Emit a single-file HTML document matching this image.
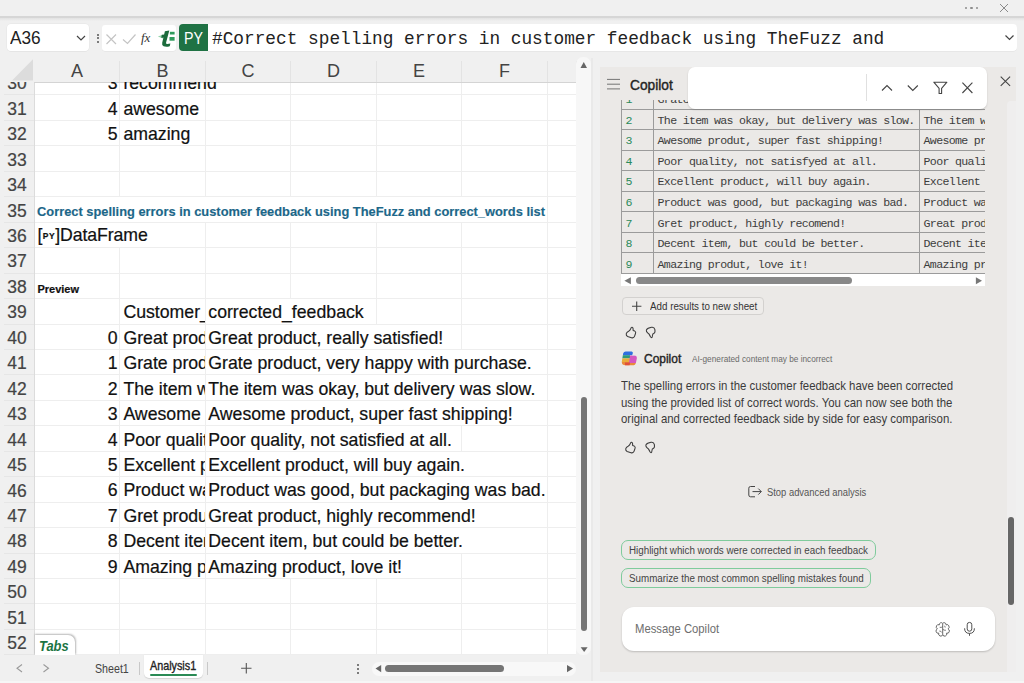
<!DOCTYPE html><html><head><meta charset="utf-8"><style>
html,body{margin:0;padding:0;}
body{width:1024px;height:683px;overflow:hidden;position:relative;background:#f0f0f0;font-family:"Liberation Sans",sans-serif;}
.t{position:absolute;white-space:nowrap;}
.cl{-webkit-text-stroke:0.2px currentColor;}
.r{position:absolute;box-sizing:border-box;}
svg{position:absolute;overflow:visible;}
</style></head><body>
<div class="r" style="left:0.00px;top:16.00px;width:1024.00px;height:2.00px;background:#d6d6d6;"></div>
<div class="r" style="left:0.00px;top:18.00px;width:1024.00px;height:3.00px;background:linear-gradient(#e2e2e2,#f0f0f0);"></div>
<div class="r" style="left:964.80px;top:6.60px;width:2.40px;height:2.40px;background:#8c8c8c;border-radius:1.2px;"></div>
<div class="r" style="left:970.30px;top:6.60px;width:2.40px;height:2.40px;background:#8c8c8c;border-radius:1.2px;"></div>
<div class="r" style="left:975.80px;top:6.60px;width:2.40px;height:2.40px;background:#8c8c8c;border-radius:1.2px;"></div>
<svg style="left:0;top:0" width="1024" height="20"><path d="M1000 4 L1008 12 M1008 4 L1000 12" stroke="#8a8a8a" stroke-width="1"/></svg>
<div class="r" style="left:7.00px;top:24.00px;width:82.00px;height:27.00px;background:#fff;border-radius:4px;box-shadow:0 0 0 0.5px #e4e4e4, 0 0.6px 0.4px #dedede;"></div>
<div class="t " style="top:29.19px;font-size:17.8px;line-height:1.1172em;font-family:'Liberation Sans', sans-serif;color:#222;left:9.60px;transform:scaleX(0.97);transform-origin:0 0;">A36</div>
<svg style="left:0;top:0" width="100" height="60"><path d="M77 36 L81 40 L85 36" fill="none" stroke="#444" stroke-width="1.2"/></svg>
<div class="r" style="left:96.50px;top:33.60px;width:2.00px;height:2.00px;background:#555;border-radius:1px;"></div>
<div class="r" style="left:96.50px;top:37.10px;width:2.00px;height:2.00px;background:#555;border-radius:1px;"></div>
<div class="r" style="left:96.50px;top:40.60px;width:2.00px;height:2.00px;background:#555;border-radius:1px;"></div>
<div class="r" style="left:102.00px;top:24.80px;width:74.00px;height:26.40px;background:#fff;border-radius:3px;box-shadow:0 0.6px 0.4px #dedede;"></div>
<svg style="left:0;top:0" width="260" height="60">
<path d="M106.5 34.5 L116 44 M116 34.5 L106.5 44" stroke="#c4c4c4" stroke-width="1.2" fill="none"/>
<path d="M123 39.5 L127.5 43.5 L135.5 34.5" stroke="#c4c4c4" stroke-width="1.2" fill="none"/>
</svg>
<div class="t" style="left:141px;top:29px;font-family:'Liberation Serif',serif;font-style:italic;font-size:13px;line-height:18px;color:#333;">fx</div>
<svg style="left:0;top:0" width="260" height="60">
<path d="M157.8 36.6 L163.6 34.4 L163 38.6 Z" fill="#93d3ab"/>
<path d="M161.8 34.8 L166.8 34.5 L166.2 37.6 L161.3 37.8 Z" fill="#1b6b3c"/>
<path d="M164.9 31.3 L169.3 30.6 L166.1 42.6 Q165.7 44.2 167.4 44.1 L170.4 43.5 L169.7 46.2 Q166.4 47.3 163.6 46.3 Q161.6 45.4 162.2 42.8 Z" fill="#1b6b3c"/>
<rect x="169.9" y="31.8" width="4.7" height="2.7" fill="#2f9a5c"/>
<rect x="169.5" y="37" width="5.1" height="3.7" fill="#2f9a5c"/>
</svg>
<div class="r" style="left:179.00px;top:24.00px;width:29.00px;height:27.20px;background:#1f7244;border-radius:4px 0 0 4px;"></div>
<div class="t " style="top:29.26px;font-size:16.5px;line-height:1.1172em;font-family:'Liberation Sans', sans-serif;color:#fff;left:184.40px;transform:scaleX(0.86);transform-origin:0 0;">PY</div>
<div class="r" style="left:208.00px;top:24.00px;width:809.00px;height:27.00px;background:#fff;border-radius:0 4px 4px 0;box-shadow:0 0.6px 0.4px #dedede;"></div>
<div class="t " style="top:29.38px;font-size:17.8px;line-height:1.1328em;font-family:'Liberation Mono', monospace;color:#222;left:212.00px;">#Correct spelling errors in customer feedback using TheFuzz and</div>
<svg style="left:0;top:0" width="1024" height="60"><path d="M1005.5 35.5 L1009.5 39.5 L1013.5 35.5" fill="none" stroke="#444" stroke-width="1.2"/></svg>
<div class="r" style="left:34.30px;top:82.30px;width:542.10px;height:572.90px;background:#fff;"></div>
<div class="r" style="left:34.30px;top:94.45px;width:542.10px;height:1.00px;background:#eeeeee;"></div>
<div class="r" style="left:34.30px;top:119.90px;width:542.10px;height:1.00px;background:#eeeeee;"></div>
<div class="r" style="left:34.30px;top:145.35px;width:542.10px;height:1.00px;background:#eeeeee;"></div>
<div class="r" style="left:34.30px;top:170.80px;width:542.10px;height:1.00px;background:#eeeeee;"></div>
<div class="r" style="left:34.30px;top:196.25px;width:542.10px;height:1.00px;background:#eeeeee;"></div>
<div class="r" style="left:34.30px;top:221.70px;width:542.10px;height:1.00px;background:#eeeeee;"></div>
<div class="r" style="left:34.30px;top:247.15px;width:542.10px;height:1.00px;background:#eeeeee;"></div>
<div class="r" style="left:34.30px;top:272.60px;width:542.10px;height:1.00px;background:#eeeeee;"></div>
<div class="r" style="left:34.30px;top:298.05px;width:542.10px;height:1.00px;background:#eeeeee;"></div>
<div class="r" style="left:34.30px;top:323.50px;width:542.10px;height:1.00px;background:#eeeeee;"></div>
<div class="r" style="left:34.30px;top:348.95px;width:542.10px;height:1.00px;background:#eeeeee;"></div>
<div class="r" style="left:34.30px;top:374.40px;width:542.10px;height:1.00px;background:#eeeeee;"></div>
<div class="r" style="left:34.30px;top:399.85px;width:542.10px;height:1.00px;background:#eeeeee;"></div>
<div class="r" style="left:34.30px;top:425.30px;width:542.10px;height:1.00px;background:#eeeeee;"></div>
<div class="r" style="left:34.30px;top:450.75px;width:542.10px;height:1.00px;background:#eeeeee;"></div>
<div class="r" style="left:34.30px;top:476.20px;width:542.10px;height:1.00px;background:#eeeeee;"></div>
<div class="r" style="left:34.30px;top:501.65px;width:542.10px;height:1.00px;background:#eeeeee;"></div>
<div class="r" style="left:34.30px;top:527.10px;width:542.10px;height:1.00px;background:#eeeeee;"></div>
<div class="r" style="left:34.30px;top:552.55px;width:542.10px;height:1.00px;background:#eeeeee;"></div>
<div class="r" style="left:34.30px;top:578.00px;width:542.10px;height:1.00px;background:#eeeeee;"></div>
<div class="r" style="left:34.30px;top:603.45px;width:542.10px;height:1.00px;background:#eeeeee;"></div>
<div class="r" style="left:34.30px;top:628.90px;width:542.10px;height:1.00px;background:#eeeeee;"></div>
<div class="r" style="left:34.30px;top:654.35px;width:542.10px;height:1.00px;background:#eeeeee;"></div>
<div class="r" style="left:119.30px;top:82.30px;width:1.00px;height:12.65px;background:#eeeeee;"></div>
<div class="r" style="left:204.80px;top:82.30px;width:1.00px;height:12.65px;background:#eeeeee;"></div>
<div class="r" style="left:290.30px;top:82.30px;width:1.00px;height:12.65px;background:#eeeeee;"></div>
<div class="r" style="left:375.80px;top:82.30px;width:1.00px;height:12.65px;background:#eeeeee;"></div>
<div class="r" style="left:461.30px;top:82.30px;width:1.00px;height:12.65px;background:#eeeeee;"></div>
<div class="r" style="left:546.80px;top:82.30px;width:1.00px;height:12.65px;background:#eeeeee;"></div>
<div class="r" style="left:119.30px;top:94.95px;width:1.00px;height:25.45px;background:#eeeeee;"></div>
<div class="r" style="left:204.80px;top:94.95px;width:1.00px;height:25.45px;background:#eeeeee;"></div>
<div class="r" style="left:290.30px;top:94.95px;width:1.00px;height:25.45px;background:#eeeeee;"></div>
<div class="r" style="left:375.80px;top:94.95px;width:1.00px;height:25.45px;background:#eeeeee;"></div>
<div class="r" style="left:461.30px;top:94.95px;width:1.00px;height:25.45px;background:#eeeeee;"></div>
<div class="r" style="left:546.80px;top:94.95px;width:1.00px;height:25.45px;background:#eeeeee;"></div>
<div class="r" style="left:119.30px;top:120.40px;width:1.00px;height:25.45px;background:#eeeeee;"></div>
<div class="r" style="left:204.80px;top:120.40px;width:1.00px;height:25.45px;background:#eeeeee;"></div>
<div class="r" style="left:290.30px;top:120.40px;width:1.00px;height:25.45px;background:#eeeeee;"></div>
<div class="r" style="left:375.80px;top:120.40px;width:1.00px;height:25.45px;background:#eeeeee;"></div>
<div class="r" style="left:461.30px;top:120.40px;width:1.00px;height:25.45px;background:#eeeeee;"></div>
<div class="r" style="left:546.80px;top:120.40px;width:1.00px;height:25.45px;background:#eeeeee;"></div>
<div class="r" style="left:119.30px;top:145.85px;width:1.00px;height:25.45px;background:#eeeeee;"></div>
<div class="r" style="left:204.80px;top:145.85px;width:1.00px;height:25.45px;background:#eeeeee;"></div>
<div class="r" style="left:290.30px;top:145.85px;width:1.00px;height:25.45px;background:#eeeeee;"></div>
<div class="r" style="left:375.80px;top:145.85px;width:1.00px;height:25.45px;background:#eeeeee;"></div>
<div class="r" style="left:461.30px;top:145.85px;width:1.00px;height:25.45px;background:#eeeeee;"></div>
<div class="r" style="left:546.80px;top:145.85px;width:1.00px;height:25.45px;background:#eeeeee;"></div>
<div class="r" style="left:119.30px;top:171.30px;width:1.00px;height:25.45px;background:#eeeeee;"></div>
<div class="r" style="left:204.80px;top:171.30px;width:1.00px;height:25.45px;background:#eeeeee;"></div>
<div class="r" style="left:290.30px;top:171.30px;width:1.00px;height:25.45px;background:#eeeeee;"></div>
<div class="r" style="left:375.80px;top:171.30px;width:1.00px;height:25.45px;background:#eeeeee;"></div>
<div class="r" style="left:461.30px;top:171.30px;width:1.00px;height:25.45px;background:#eeeeee;"></div>
<div class="r" style="left:546.80px;top:171.30px;width:1.00px;height:25.45px;background:#eeeeee;"></div>
<div class="r" style="left:546.80px;top:196.75px;width:1.00px;height:25.45px;background:#eeeeee;"></div>
<div class="r" style="left:204.80px;top:222.20px;width:1.00px;height:25.45px;background:#eeeeee;"></div>
<div class="r" style="left:290.30px;top:222.20px;width:1.00px;height:25.45px;background:#eeeeee;"></div>
<div class="r" style="left:375.80px;top:222.20px;width:1.00px;height:25.45px;background:#eeeeee;"></div>
<div class="r" style="left:461.30px;top:222.20px;width:1.00px;height:25.45px;background:#eeeeee;"></div>
<div class="r" style="left:546.80px;top:222.20px;width:1.00px;height:25.45px;background:#eeeeee;"></div>
<div class="r" style="left:119.30px;top:247.65px;width:1.00px;height:25.45px;background:#eeeeee;"></div>
<div class="r" style="left:204.80px;top:247.65px;width:1.00px;height:25.45px;background:#eeeeee;"></div>
<div class="r" style="left:290.30px;top:247.65px;width:1.00px;height:25.45px;background:#eeeeee;"></div>
<div class="r" style="left:375.80px;top:247.65px;width:1.00px;height:25.45px;background:#eeeeee;"></div>
<div class="r" style="left:461.30px;top:247.65px;width:1.00px;height:25.45px;background:#eeeeee;"></div>
<div class="r" style="left:546.80px;top:247.65px;width:1.00px;height:25.45px;background:#eeeeee;"></div>
<div class="r" style="left:119.30px;top:273.10px;width:1.00px;height:25.45px;background:#eeeeee;"></div>
<div class="r" style="left:204.80px;top:273.10px;width:1.00px;height:25.45px;background:#eeeeee;"></div>
<div class="r" style="left:290.30px;top:273.10px;width:1.00px;height:25.45px;background:#eeeeee;"></div>
<div class="r" style="left:375.80px;top:273.10px;width:1.00px;height:25.45px;background:#eeeeee;"></div>
<div class="r" style="left:461.30px;top:273.10px;width:1.00px;height:25.45px;background:#eeeeee;"></div>
<div class="r" style="left:546.80px;top:273.10px;width:1.00px;height:25.45px;background:#eeeeee;"></div>
<div class="r" style="left:119.30px;top:298.55px;width:1.00px;height:25.45px;background:#eeeeee;"></div>
<div class="r" style="left:204.80px;top:298.55px;width:1.00px;height:25.45px;background:#eeeeee;"></div>
<div class="r" style="left:375.80px;top:298.55px;width:1.00px;height:25.45px;background:#eeeeee;"></div>
<div class="r" style="left:461.30px;top:298.55px;width:1.00px;height:25.45px;background:#eeeeee;"></div>
<div class="r" style="left:546.80px;top:298.55px;width:1.00px;height:25.45px;background:#eeeeee;"></div>
<div class="r" style="left:119.30px;top:324.00px;width:1.00px;height:25.45px;background:#eeeeee;"></div>
<div class="r" style="left:204.80px;top:324.00px;width:1.00px;height:25.45px;background:#eeeeee;"></div>
<div class="r" style="left:461.30px;top:324.00px;width:1.00px;height:25.45px;background:#eeeeee;"></div>
<div class="r" style="left:546.80px;top:324.00px;width:1.00px;height:25.45px;background:#eeeeee;"></div>
<div class="r" style="left:119.30px;top:349.45px;width:1.00px;height:25.45px;background:#eeeeee;"></div>
<div class="r" style="left:204.80px;top:349.45px;width:1.00px;height:25.45px;background:#eeeeee;"></div>
<div class="r" style="left:546.80px;top:349.45px;width:1.00px;height:25.45px;background:#eeeeee;"></div>
<div class="r" style="left:119.30px;top:374.90px;width:1.00px;height:25.45px;background:#eeeeee;"></div>
<div class="r" style="left:204.80px;top:374.90px;width:1.00px;height:25.45px;background:#eeeeee;"></div>
<div class="r" style="left:546.80px;top:374.90px;width:1.00px;height:25.45px;background:#eeeeee;"></div>
<div class="r" style="left:119.30px;top:400.35px;width:1.00px;height:25.45px;background:#eeeeee;"></div>
<div class="r" style="left:204.80px;top:400.35px;width:1.00px;height:25.45px;background:#eeeeee;"></div>
<div class="r" style="left:546.80px;top:400.35px;width:1.00px;height:25.45px;background:#eeeeee;"></div>
<div class="r" style="left:119.30px;top:425.80px;width:1.00px;height:25.45px;background:#eeeeee;"></div>
<div class="r" style="left:204.80px;top:425.80px;width:1.00px;height:25.45px;background:#eeeeee;"></div>
<div class="r" style="left:461.30px;top:425.80px;width:1.00px;height:25.45px;background:#eeeeee;"></div>
<div class="r" style="left:546.80px;top:425.80px;width:1.00px;height:25.45px;background:#eeeeee;"></div>
<div class="r" style="left:119.30px;top:451.25px;width:1.00px;height:25.45px;background:#eeeeee;"></div>
<div class="r" style="left:204.80px;top:451.25px;width:1.00px;height:25.45px;background:#eeeeee;"></div>
<div class="r" style="left:546.80px;top:451.25px;width:1.00px;height:25.45px;background:#eeeeee;"></div>
<div class="r" style="left:119.30px;top:476.70px;width:1.00px;height:25.45px;background:#eeeeee;"></div>
<div class="r" style="left:204.80px;top:476.70px;width:1.00px;height:25.45px;background:#eeeeee;"></div>
<div class="r" style="left:546.80px;top:476.70px;width:1.00px;height:25.45px;background:#eeeeee;"></div>
<div class="r" style="left:119.30px;top:502.15px;width:1.00px;height:25.45px;background:#eeeeee;"></div>
<div class="r" style="left:204.80px;top:502.15px;width:1.00px;height:25.45px;background:#eeeeee;"></div>
<div class="r" style="left:546.80px;top:502.15px;width:1.00px;height:25.45px;background:#eeeeee;"></div>
<div class="r" style="left:119.30px;top:527.60px;width:1.00px;height:25.45px;background:#eeeeee;"></div>
<div class="r" style="left:204.80px;top:527.60px;width:1.00px;height:25.45px;background:#eeeeee;"></div>
<div class="r" style="left:546.80px;top:527.60px;width:1.00px;height:25.45px;background:#eeeeee;"></div>
<div class="r" style="left:119.30px;top:553.05px;width:1.00px;height:25.45px;background:#eeeeee;"></div>
<div class="r" style="left:204.80px;top:553.05px;width:1.00px;height:25.45px;background:#eeeeee;"></div>
<div class="r" style="left:461.30px;top:553.05px;width:1.00px;height:25.45px;background:#eeeeee;"></div>
<div class="r" style="left:546.80px;top:553.05px;width:1.00px;height:25.45px;background:#eeeeee;"></div>
<div class="r" style="left:119.30px;top:578.50px;width:1.00px;height:25.45px;background:#eeeeee;"></div>
<div class="r" style="left:204.80px;top:578.50px;width:1.00px;height:25.45px;background:#eeeeee;"></div>
<div class="r" style="left:290.30px;top:578.50px;width:1.00px;height:25.45px;background:#eeeeee;"></div>
<div class="r" style="left:375.80px;top:578.50px;width:1.00px;height:25.45px;background:#eeeeee;"></div>
<div class="r" style="left:461.30px;top:578.50px;width:1.00px;height:25.45px;background:#eeeeee;"></div>
<div class="r" style="left:546.80px;top:578.50px;width:1.00px;height:25.45px;background:#eeeeee;"></div>
<div class="r" style="left:119.30px;top:603.95px;width:1.00px;height:25.45px;background:#eeeeee;"></div>
<div class="r" style="left:204.80px;top:603.95px;width:1.00px;height:25.45px;background:#eeeeee;"></div>
<div class="r" style="left:290.30px;top:603.95px;width:1.00px;height:25.45px;background:#eeeeee;"></div>
<div class="r" style="left:375.80px;top:603.95px;width:1.00px;height:25.45px;background:#eeeeee;"></div>
<div class="r" style="left:461.30px;top:603.95px;width:1.00px;height:25.45px;background:#eeeeee;"></div>
<div class="r" style="left:546.80px;top:603.95px;width:1.00px;height:25.45px;background:#eeeeee;"></div>
<div class="r" style="left:119.30px;top:629.40px;width:1.00px;height:25.45px;background:#eeeeee;"></div>
<div class="r" style="left:204.80px;top:629.40px;width:1.00px;height:25.45px;background:#eeeeee;"></div>
<div class="r" style="left:290.30px;top:629.40px;width:1.00px;height:25.45px;background:#eeeeee;"></div>
<div class="r" style="left:375.80px;top:629.40px;width:1.00px;height:25.45px;background:#eeeeee;"></div>
<div class="r" style="left:461.30px;top:629.40px;width:1.00px;height:25.45px;background:#eeeeee;"></div>
<div class="r" style="left:546.80px;top:629.40px;width:1.00px;height:25.45px;background:#eeeeee;"></div>
<div class="r" style="left:0.00px;top:82.30px;width:34.30px;height:572.90px;background:#f0f0f0;"></div>
<div class="r" style="left:33.80px;top:60.00px;width:1.00px;height:595.20px;background:#dcdcdc;"></div>
<div class="r" style="left:4.00px;top:94.45px;width:30.30px;height:1.00px;background:#e6e6e6;"></div>
<div class="r" style="left:4.00px;top:119.90px;width:30.30px;height:1.00px;background:#e6e6e6;"></div>
<div class="r" style="left:4.00px;top:145.35px;width:30.30px;height:1.00px;background:#e6e6e6;"></div>
<div class="r" style="left:4.00px;top:170.80px;width:30.30px;height:1.00px;background:#e6e6e6;"></div>
<div class="r" style="left:4.00px;top:196.25px;width:30.30px;height:1.00px;background:#e6e6e6;"></div>
<div class="r" style="left:4.00px;top:221.70px;width:30.30px;height:1.00px;background:#e6e6e6;"></div>
<div class="r" style="left:4.00px;top:247.15px;width:30.30px;height:1.00px;background:#e6e6e6;"></div>
<div class="r" style="left:4.00px;top:272.60px;width:30.30px;height:1.00px;background:#e6e6e6;"></div>
<div class="r" style="left:4.00px;top:298.05px;width:30.30px;height:1.00px;background:#e6e6e6;"></div>
<div class="r" style="left:4.00px;top:323.50px;width:30.30px;height:1.00px;background:#e6e6e6;"></div>
<div class="r" style="left:4.00px;top:348.95px;width:30.30px;height:1.00px;background:#e6e6e6;"></div>
<div class="r" style="left:4.00px;top:374.40px;width:30.30px;height:1.00px;background:#e6e6e6;"></div>
<div class="r" style="left:4.00px;top:399.85px;width:30.30px;height:1.00px;background:#e6e6e6;"></div>
<div class="r" style="left:4.00px;top:425.30px;width:30.30px;height:1.00px;background:#e6e6e6;"></div>
<div class="r" style="left:4.00px;top:450.75px;width:30.30px;height:1.00px;background:#e6e6e6;"></div>
<div class="r" style="left:4.00px;top:476.20px;width:30.30px;height:1.00px;background:#e6e6e6;"></div>
<div class="r" style="left:4.00px;top:501.65px;width:30.30px;height:1.00px;background:#e6e6e6;"></div>
<div class="r" style="left:4.00px;top:527.10px;width:30.30px;height:1.00px;background:#e6e6e6;"></div>
<div class="r" style="left:4.00px;top:552.55px;width:30.30px;height:1.00px;background:#e6e6e6;"></div>
<div class="r" style="left:4.00px;top:578.00px;width:30.30px;height:1.00px;background:#e6e6e6;"></div>
<div class="r" style="left:4.00px;top:603.45px;width:30.30px;height:1.00px;background:#e6e6e6;"></div>
<div class="r" style="left:4.00px;top:628.90px;width:30.30px;height:1.00px;background:#e6e6e6;"></div>
<div class="r" style="left:4.00px;top:654.35px;width:30.30px;height:1.00px;background:#e6e6e6;"></div>
<div class="r" style="left:0.00px;top:60.00px;width:576.40px;height:22.30px;background:#f0f0f0;"></div>
<div class="r" style="left:34.30px;top:81.80px;width:542.10px;height:1.00px;background:#d4d4d4;"></div>
<div class="r" style="left:119.30px;top:61.00px;width:1.00px;height:21.30px;background:#e3e3e3;"></div>
<div class="r" style="left:204.80px;top:61.00px;width:1.00px;height:21.30px;background:#e3e3e3;"></div>
<div class="r" style="left:290.30px;top:61.00px;width:1.00px;height:21.30px;background:#e3e3e3;"></div>
<div class="r" style="left:375.80px;top:61.00px;width:1.00px;height:21.30px;background:#e3e3e3;"></div>
<div class="r" style="left:461.30px;top:61.00px;width:1.00px;height:21.30px;background:#e3e3e3;"></div>
<div class="r" style="left:546.80px;top:61.00px;width:1.00px;height:21.30px;background:#e3e3e3;"></div>
<div class="r" style="left:575.90px;top:61.00px;width:1.00px;height:21.30px;background:#e3e3e3;"></div>
<svg style="left:0;top:0" width="40" height="90"><path d="M33 59.2 L33 80.6 L12 80.6 Z" fill="#dcdcdc"/></svg>
<div class="t" style="left:47.05px;width:60px;text-align:center;top:60.70px;font-size:18px;line-height:1.1172em;color:#444;">A</div>
<div class="t" style="left:132.55px;width:60px;text-align:center;top:60.70px;font-size:18px;line-height:1.1172em;color:#444;">B</div>
<div class="t" style="left:218.05px;width:60px;text-align:center;top:60.70px;font-size:18px;line-height:1.1172em;color:#444;">C</div>
<div class="t" style="left:303.55px;width:60px;text-align:center;top:60.70px;font-size:18px;line-height:1.1172em;color:#444;">D</div>
<div class="t" style="left:389.05px;width:60px;text-align:center;top:60.70px;font-size:18px;line-height:1.1172em;color:#444;">E</div>
<div class="t" style="left:474.55px;width:60px;text-align:center;top:60.70px;font-size:18px;line-height:1.1172em;color:#444;">F</div>
<div style="position:absolute;left:0;top:82.3px;width:576.4px;height:572.9000000000001px;overflow:hidden;">
<div class="t cl" style="top:-7.99px;font-size:17.5px;line-height:1.1172em;color:#444;left:0.00px;width:34px;text-align:center;">30</div>
<div class="t cl" style="top:17.46px;font-size:17.5px;line-height:1.1172em;color:#444;left:0.00px;width:34px;text-align:center;">31</div>
<div class="t cl" style="top:42.91px;font-size:17.5px;line-height:1.1172em;color:#444;left:0.00px;width:34px;text-align:center;">32</div>
<div class="t cl" style="top:68.36px;font-size:17.5px;line-height:1.1172em;color:#444;left:0.00px;width:34px;text-align:center;">33</div>
<div class="t cl" style="top:93.81px;font-size:17.5px;line-height:1.1172em;color:#444;left:0.00px;width:34px;text-align:center;">34</div>
<div class="t cl" style="top:119.26px;font-size:17.5px;line-height:1.1172em;color:#444;left:0.00px;width:34px;text-align:center;">35</div>
<div class="t cl" style="top:144.71px;font-size:17.5px;line-height:1.1172em;color:#444;left:0.00px;width:34px;text-align:center;">36</div>
<div class="t cl" style="top:170.16px;font-size:17.5px;line-height:1.1172em;color:#444;left:0.00px;width:34px;text-align:center;">37</div>
<div class="t cl" style="top:195.61px;font-size:17.5px;line-height:1.1172em;color:#444;left:0.00px;width:34px;text-align:center;">38</div>
<div class="t cl" style="top:221.06px;font-size:17.5px;line-height:1.1172em;color:#444;left:0.00px;width:34px;text-align:center;">39</div>
<div class="t cl" style="top:246.51px;font-size:17.5px;line-height:1.1172em;color:#444;left:0.00px;width:34px;text-align:center;">40</div>
<div class="t cl" style="top:271.96px;font-size:17.5px;line-height:1.1172em;color:#444;left:0.00px;width:34px;text-align:center;">41</div>
<div class="t cl" style="top:297.41px;font-size:17.5px;line-height:1.1172em;color:#444;left:0.00px;width:34px;text-align:center;">42</div>
<div class="t cl" style="top:322.86px;font-size:17.5px;line-height:1.1172em;color:#444;left:0.00px;width:34px;text-align:center;">43</div>
<div class="t cl" style="top:348.31px;font-size:17.5px;line-height:1.1172em;color:#444;left:0.00px;width:34px;text-align:center;">44</div>
<div class="t cl" style="top:373.76px;font-size:17.5px;line-height:1.1172em;color:#444;left:0.00px;width:34px;text-align:center;">45</div>
<div class="t cl" style="top:399.21px;font-size:17.5px;line-height:1.1172em;color:#444;left:0.00px;width:34px;text-align:center;">46</div>
<div class="t cl" style="top:424.66px;font-size:17.5px;line-height:1.1172em;color:#444;left:0.00px;width:34px;text-align:center;">47</div>
<div class="t cl" style="top:450.11px;font-size:17.5px;line-height:1.1172em;color:#444;left:0.00px;width:34px;text-align:center;">48</div>
<div class="t cl" style="top:475.56px;font-size:17.5px;line-height:1.1172em;color:#444;left:0.00px;width:34px;text-align:center;">49</div>
<div class="t cl" style="top:501.01px;font-size:17.5px;line-height:1.1172em;color:#444;left:0.00px;width:34px;text-align:center;">50</div>
<div class="t cl" style="top:526.46px;font-size:17.5px;line-height:1.1172em;color:#444;left:0.00px;width:34px;text-align:center;">51</div>
<div class="t cl" style="top:551.91px;font-size:17.5px;line-height:1.1172em;color:#444;left:0.00px;width:34px;text-align:center;">52</div>
<div class="t cl" style="top:-8.07px;font-size:17.7px;line-height:1.1172em;color:#111;right:458.80px;">3</div>
<div class="t cl" style="top:-8.07px;font-size:17.7px;line-height:1.1172em;color:#111;left:123.40px;">recommend</div>
<div class="t cl" style="top:17.38px;font-size:17.7px;line-height:1.1172em;color:#111;right:458.80px;">4</div>
<div class="t cl" style="top:17.38px;font-size:17.7px;line-height:1.1172em;color:#111;left:123.40px;">awesome</div>
<div class="t cl" style="top:42.83px;font-size:17.7px;line-height:1.1172em;color:#111;right:458.80px;">5</div>
<div class="t cl" style="top:42.83px;font-size:17.7px;line-height:1.1172em;color:#111;left:123.40px;">amazing</div>
<div class="t cl" style="top:122.46px;font-size:13.3px;line-height:1.1172em;color:#1c6789;font-weight:700;left:37.40px;transform:scaleX(0.967);transform-origin:0 0;-webkit-text-stroke:0.15px #1c6789;">Correct spelling errors in customer feedback using TheFuzz and correct_words list</div>
<div class="t cl" style="top:144.13px;font-size:17.7px;line-height:1.1172em;color:#111;left:37.40px;letter-spacing:-0.1px;"><span>[<span style="font-size:8.5px;font-weight:700;vertical-align:2px;letter-spacing:0.6px;margin-left:0.5px;">PY</span>]</span>DataFrame</div>
<div class="t cl" style="top:200.29px;font-size:11px;line-height:1.1172em;color:#111;font-weight:700;left:37.40px;">Preview</div>
<div style="position:absolute;left:119.8px;top:216.25px;width:85.00px;height:25px;overflow:hidden;">
<div class="t cl" style="left:3.6px;top:4.73px;font-size:17.7px;line-height:1.1172em;color:#111;">Customer_feedback</div></div>
<div class="t cl" style="top:220.98px;font-size:17.7px;line-height:1.1172em;color:#111;left:208.30px;">corrected_feedback</div>
<div class="t cl" style="top:246.43px;font-size:17.7px;line-height:1.1172em;color:#111;right:458.80px;">0</div>
<div style="position:absolute;left:119.8px;top:241.70px;width:85.00px;height:25px;overflow:hidden;">
<div class="t cl" style="left:3.6px;top:4.73px;font-size:17.7px;line-height:1.1172em;color:#111;">Great product, realy satisfied!</div></div>
<div class="t cl" style="top:246.43px;font-size:17.7px;line-height:1.1172em;color:#111;left:208.30px;">Great product, really satisfied!</div>
<div class="t cl" style="top:271.88px;font-size:17.7px;line-height:1.1172em;color:#111;right:458.80px;">1</div>
<div style="position:absolute;left:119.8px;top:267.15px;width:85.00px;height:25px;overflow:hidden;">
<div class="t cl" style="left:3.6px;top:4.73px;font-size:17.7px;line-height:1.1172em;color:#111;">Grate product, very happy with purchase.</div></div>
<div class="t cl" style="top:271.88px;font-size:17.7px;line-height:1.1172em;color:#111;left:208.30px;">Grate product, very happy with purchase.</div>
<div class="t cl" style="top:297.33px;font-size:17.7px;line-height:1.1172em;color:#111;right:458.80px;">2</div>
<div style="position:absolute;left:119.8px;top:292.60px;width:85.00px;height:25px;overflow:hidden;">
<div class="t cl" style="left:3.6px;top:4.73px;font-size:17.7px;line-height:1.1172em;color:#111;">The item was okay, but delivery was slow.</div></div>
<div class="t cl" style="top:297.33px;font-size:17.7px;line-height:1.1172em;color:#111;left:208.30px;">The item was okay, but delivery was slow.</div>
<div class="t cl" style="top:322.78px;font-size:17.7px;line-height:1.1172em;color:#111;right:458.80px;">3</div>
<div style="position:absolute;left:119.8px;top:318.05px;width:85.00px;height:25px;overflow:hidden;">
<div class="t cl" style="left:3.6px;top:4.73px;font-size:17.7px;line-height:1.1172em;color:#111;">Awesome produt, super fast shipping!</div></div>
<div class="t cl" style="top:322.78px;font-size:17.7px;line-height:1.1172em;color:#111;left:208.30px;">Awesome product, super fast shipping!</div>
<div class="t cl" style="top:348.23px;font-size:17.7px;line-height:1.1172em;color:#111;right:458.80px;">4</div>
<div style="position:absolute;left:119.8px;top:343.50px;width:85.00px;height:25px;overflow:hidden;">
<div class="t cl" style="left:3.6px;top:4.73px;font-size:17.7px;line-height:1.1172em;color:#111;">Poor quality, not satisfyed at all.</div></div>
<div class="t cl" style="top:348.23px;font-size:17.7px;line-height:1.1172em;color:#111;left:208.30px;">Poor quality, not satisfied at all.</div>
<div class="t cl" style="top:373.68px;font-size:17.7px;line-height:1.1172em;color:#111;right:458.80px;">5</div>
<div style="position:absolute;left:119.8px;top:368.95px;width:85.00px;height:25px;overflow:hidden;">
<div class="t cl" style="left:3.6px;top:4.73px;font-size:17.7px;line-height:1.1172em;color:#111;">Excellent product, will buy again.</div></div>
<div class="t cl" style="top:373.68px;font-size:17.7px;line-height:1.1172em;color:#111;left:208.30px;">Excellent product, will buy again.</div>
<div class="t cl" style="top:399.13px;font-size:17.7px;line-height:1.1172em;color:#111;right:458.80px;">6</div>
<div style="position:absolute;left:119.8px;top:394.40px;width:85.00px;height:25px;overflow:hidden;">
<div class="t cl" style="left:3.6px;top:4.73px;font-size:17.7px;line-height:1.1172em;color:#111;">Product was good, but packaging was bad.</div></div>
<div class="t cl" style="top:399.13px;font-size:17.7px;line-height:1.1172em;color:#111;left:208.30px;">Product was good, but packaging was bad.</div>
<div class="t cl" style="top:424.58px;font-size:17.7px;line-height:1.1172em;color:#111;right:458.80px;">7</div>
<div style="position:absolute;left:119.8px;top:419.85px;width:85.00px;height:25px;overflow:hidden;">
<div class="t cl" style="left:3.6px;top:4.73px;font-size:17.7px;line-height:1.1172em;color:#111;">Gret product, highly recomend!</div></div>
<div class="t cl" style="top:424.58px;font-size:17.7px;line-height:1.1172em;color:#111;left:208.30px;">Great product, highly recommend!</div>
<div class="t cl" style="top:450.03px;font-size:17.7px;line-height:1.1172em;color:#111;right:458.80px;">8</div>
<div style="position:absolute;left:119.8px;top:445.30px;width:85.00px;height:25px;overflow:hidden;">
<div class="t cl" style="left:3.6px;top:4.73px;font-size:17.7px;line-height:1.1172em;color:#111;">Decent item, but could be better.</div></div>
<div class="t cl" style="top:450.03px;font-size:17.7px;line-height:1.1172em;color:#111;left:208.30px;">Decent item, but could be better.</div>
<div class="t cl" style="top:475.48px;font-size:17.7px;line-height:1.1172em;color:#111;right:458.80px;">9</div>
<div style="position:absolute;left:119.8px;top:470.75px;width:85.00px;height:25px;overflow:hidden;">
<div class="t cl" style="left:3.6px;top:4.73px;font-size:17.7px;line-height:1.1172em;color:#111;">Amazing produt, love it!</div></div>
<div class="t cl" style="top:475.48px;font-size:17.7px;line-height:1.1172em;color:#111;left:208.30px;">Amazing product, love it!</div>
</div>
<div class="r" style="left:34.8px;top:635.2px;width:40.4px;height:20px;background:#fff;border-radius:0 7px 0 0;box-shadow:0.5px -1px 2px rgba(0,0,0,0.28);"></div>
<div class="t " style="top:637.62px;font-size:15px;line-height:1.1172em;font-family:'Liberation Sans', sans-serif;color:#1b7443;font-weight:700;left:38.80px;font-style:italic;transform:scaleX(0.86);transform-origin:0 0;">Tabs</div>
<div class="r" style="left:576.40px;top:57.00px;width:14.70px;height:598.40px;background:#f7f7f7;border-radius:7px;"></div>
<svg style="left:0;top:0" width="600" height="683"><path d="M580.5 68 L587 68 L583.75 62 Z" fill="#666"/><path d="M580.7 647.3 L587.6 647.3 L584.15 652 Z" fill="#666"/></svg>
<div class="r" style="left:580.50px;top:397.20px;width:6.50px;height:233.60px;background:#757575;border-radius:3.5px;"></div>
<div class="r" style="left:0.00px;top:655.20px;width:591.00px;height:28.00px;background:#f0f0f0;"></div>
<div class="r" style="left:591.20px;top:58.00px;width:1.40px;height:625.00px;background:#e9e9e9;"></div>
<svg style="left:0;top:0" width="600" height="683"><path d="M22 664.5 L17 668.2 L22 672" fill="none" stroke="#9a9a9a" stroke-width="1.1"/><path d="M43.5 664.5 L48.5 668.2 L43.5 672" fill="none" stroke="#9a9a9a" stroke-width="1.1"/></svg>
<div class="t " style="top:662.97px;font-size:12.4px;line-height:1.1172em;font-family:'Liberation Sans', sans-serif;color:#444;left:94.70px;transform:scaleX(0.86);transform-origin:0 0;">Sheet1</div>
<div class="r" style="left:139.20px;top:662.00px;width:1.00px;height:12.50px;background:#c8c8c8;"></div>
<div class="r" style="left:143.50px;top:655.30px;width:59.60px;height:23.00px;background:#fff;border-radius:0 0 5px 5px;box-shadow:0 0.5px 1px rgba(0,0,0,0.12);"></div>
<div class="t " style="top:659.97px;font-size:12.4px;line-height:1.1172em;font-family:'Liberation Sans', sans-serif;color:#222;left:149.80px;-webkit-text-stroke:0.35px #222;transform:scaleX(0.87);transform-origin:0 0;">Analysis1</div>
<div class="r" style="left:149.80px;top:674.30px;width:47.00px;height:2.00px;background:#2a8a55;border-radius:1px;"></div>
<div class="r" style="left:206.50px;top:662.00px;width:1.00px;height:12.50px;background:#c8c8c8;"></div>
<svg style="left:0;top:0" width="600" height="683"><path d="M246.3 663 L246.3 673.4 M241.1 668.2 L251.5 668.2" stroke="#555" stroke-width="1.1"/></svg>
<div class="r" style="left:357.30px;top:664.10px;width:2.00px;height:2.00px;background:#555;border-radius:1px;"></div>
<div class="r" style="left:357.30px;top:667.80px;width:2.00px;height:2.00px;background:#555;border-radius:1px;"></div>
<div class="r" style="left:357.30px;top:671.50px;width:2.00px;height:2.00px;background:#555;border-radius:1px;"></div>
<div class="r" style="left:371.70px;top:661.70px;width:204.50px;height:14.00px;background:#f8f8f8;border-radius:7px;"></div>
<svg style="left:0;top:0" width="600" height="683"><path d="M381.2 665 L381.2 672.2 L375.5 668.6 Z" fill="#666"/><path d="M567 665 L567 672.2 L573 668.6 Z" fill="#666"/></svg>
<div class="r" style="left:385.20px;top:665.00px;width:118.60px;height:6.90px;background:#757575;border-radius:3.5px;"></div>
<div class="r" style="left:599.80px;top:67.10px;width:416.20px;height:604.80px;background:#ebe9e7;"></div>
<div class="r" style="left:1006.80px;top:101.00px;width:9.20px;height:571.00px;background:#efeeee;border-radius:4px 0 0 0;"></div>
<div style="position:absolute;left:621.0px;top:100px;width:364.20px;height:186px;overflow:hidden;">
<div class="r" style="left:0;top:0;width:1px;height:173.98px;background:#9b9b9b;"></div>
<div class="r" style="left:31.80px;top:0;width:1px;height:173.98px;background:#9b9b9b;"></div>
<div class="r" style="left:298.10px;top:0;width:1px;height:173.98px;background:#9b9b9b;"></div>
<div class="r" style="left:0;top:8.90px;width:364.20000000000005px;height:1px;background:#9b9b9b;"></div>
<div class="r" style="left:0;top:29.41px;width:364.20000000000005px;height:1px;background:#9b9b9b;"></div>
<div class="r" style="left:0;top:49.92px;width:364.20000000000005px;height:1px;background:#9b9b9b;"></div>
<div class="r" style="left:0;top:70.43px;width:364.20000000000005px;height:1px;background:#9b9b9b;"></div>
<div class="r" style="left:0;top:90.94px;width:364.20000000000005px;height:1px;background:#9b9b9b;"></div>
<div class="r" style="left:0;top:111.45px;width:364.20000000000005px;height:1px;background:#9b9b9b;"></div>
<div class="r" style="left:0;top:131.96px;width:364.20000000000005px;height:1px;background:#9b9b9b;"></div>
<div class="r" style="left:0;top:152.47px;width:364.20000000000005px;height:1px;background:#9b9b9b;"></div>
<div class="r" style="left:0;top:172.98px;width:364.20000000000005px;height:1px;background:#9b9b9b;"></div>
<div class="t" style="left:4.40px;top:-6.56px;font-size:11.6px;line-height:1.1328em;font-family:'Liberation Mono',monospace;letter-spacing:-0.690px;color:#2a8a5a;">1</div>
<div class="t" style="left:36.60px;top:-6.56px;font-size:11.6px;line-height:1.1328em;font-family:'Liberation Mono',monospace;letter-spacing:-0.690px;color:#3d3d3d;">Grate product, very happy with purchase.</div>
<div class="t" style="left:302.60px;top:-6.56px;font-size:11.6px;line-height:1.1328em;font-family:'Liberation Mono',monospace;letter-spacing:-0.690px;color:#3d3d3d;">Grate product, very happy with purchase.</div>
<div class="t" style="left:4.40px;top:13.95px;font-size:11.6px;line-height:1.1328em;font-family:'Liberation Mono',monospace;letter-spacing:-0.690px;color:#2a8a5a;">2</div>
<div class="t" style="left:36.60px;top:13.95px;font-size:11.6px;line-height:1.1328em;font-family:'Liberation Mono',monospace;letter-spacing:-0.690px;color:#3d3d3d;">The item was okay, but delivery was slow.</div>
<div class="t" style="left:302.60px;top:13.95px;font-size:11.6px;line-height:1.1328em;font-family:'Liberation Mono',monospace;letter-spacing:-0.690px;color:#3d3d3d;">The item was okay, but delivery was slow.</div>
<div class="t" style="left:4.40px;top:34.46px;font-size:11.6px;line-height:1.1328em;font-family:'Liberation Mono',monospace;letter-spacing:-0.690px;color:#2a8a5a;">3</div>
<div class="t" style="left:36.60px;top:34.46px;font-size:11.6px;line-height:1.1328em;font-family:'Liberation Mono',monospace;letter-spacing:-0.690px;color:#3d3d3d;">Awesome produt, super fast shipping!</div>
<div class="t" style="left:302.60px;top:34.46px;font-size:11.6px;line-height:1.1328em;font-family:'Liberation Mono',monospace;letter-spacing:-0.690px;color:#3d3d3d;">Awesome product, super fast shipping!</div>
<div class="t" style="left:4.40px;top:54.97px;font-size:11.6px;line-height:1.1328em;font-family:'Liberation Mono',monospace;letter-spacing:-0.690px;color:#2a8a5a;">4</div>
<div class="t" style="left:36.60px;top:54.97px;font-size:11.6px;line-height:1.1328em;font-family:'Liberation Mono',monospace;letter-spacing:-0.690px;color:#3d3d3d;">Poor quality, not satisfyed at all.</div>
<div class="t" style="left:302.60px;top:54.97px;font-size:11.6px;line-height:1.1328em;font-family:'Liberation Mono',monospace;letter-spacing:-0.690px;color:#3d3d3d;">Poor quality, not satisfied at all.</div>
<div class="t" style="left:4.40px;top:75.48px;font-size:11.6px;line-height:1.1328em;font-family:'Liberation Mono',monospace;letter-spacing:-0.690px;color:#2a8a5a;">5</div>
<div class="t" style="left:36.60px;top:75.48px;font-size:11.6px;line-height:1.1328em;font-family:'Liberation Mono',monospace;letter-spacing:-0.690px;color:#3d3d3d;">Excellent product, will buy again.</div>
<div class="t" style="left:302.60px;top:75.48px;font-size:11.6px;line-height:1.1328em;font-family:'Liberation Mono',monospace;letter-spacing:-0.690px;color:#3d3d3d;">Excellent product, will buy again.</div>
<div class="t" style="left:4.40px;top:95.99px;font-size:11.6px;line-height:1.1328em;font-family:'Liberation Mono',monospace;letter-spacing:-0.690px;color:#2a8a5a;">6</div>
<div class="t" style="left:36.60px;top:95.99px;font-size:11.6px;line-height:1.1328em;font-family:'Liberation Mono',monospace;letter-spacing:-0.690px;color:#3d3d3d;">Product was good, but packaging was bad.</div>
<div class="t" style="left:302.60px;top:95.99px;font-size:11.6px;line-height:1.1328em;font-family:'Liberation Mono',monospace;letter-spacing:-0.690px;color:#3d3d3d;">Product was good, but packaging was bad.</div>
<div class="t" style="left:4.40px;top:116.50px;font-size:11.6px;line-height:1.1328em;font-family:'Liberation Mono',monospace;letter-spacing:-0.690px;color:#2a8a5a;">7</div>
<div class="t" style="left:36.60px;top:116.50px;font-size:11.6px;line-height:1.1328em;font-family:'Liberation Mono',monospace;letter-spacing:-0.690px;color:#3d3d3d;">Gret product, highly recomend!</div>
<div class="t" style="left:302.60px;top:116.50px;font-size:11.6px;line-height:1.1328em;font-family:'Liberation Mono',monospace;letter-spacing:-0.690px;color:#3d3d3d;">Great product, highly recommend!</div>
<div class="t" style="left:4.40px;top:137.01px;font-size:11.6px;line-height:1.1328em;font-family:'Liberation Mono',monospace;letter-spacing:-0.690px;color:#2a8a5a;">8</div>
<div class="t" style="left:36.60px;top:137.01px;font-size:11.6px;line-height:1.1328em;font-family:'Liberation Mono',monospace;letter-spacing:-0.690px;color:#3d3d3d;">Decent item, but could be better.</div>
<div class="t" style="left:302.60px;top:137.01px;font-size:11.6px;line-height:1.1328em;font-family:'Liberation Mono',monospace;letter-spacing:-0.690px;color:#3d3d3d;">Decent item, but could be better.</div>
<div class="t" style="left:4.40px;top:157.52px;font-size:11.6px;line-height:1.1328em;font-family:'Liberation Mono',monospace;letter-spacing:-0.690px;color:#2a8a5a;">9</div>
<div class="t" style="left:36.60px;top:157.52px;font-size:11.6px;line-height:1.1328em;font-family:'Liberation Mono',monospace;letter-spacing:-0.690px;color:#3d3d3d;">Amazing produt, love it!</div>
<div class="t" style="left:302.60px;top:157.52px;font-size:11.6px;line-height:1.1328em;font-family:'Liberation Mono',monospace;letter-spacing:-0.690px;color:#3d3d3d;">Amazing product, love it!</div>
<div class="r" style="left:0;top:173.98px;width:364.20000000000005px;height:12px;background:#fff;"></div>
<svg style="left:0;top:0" width="400" height="300"><path d="M9.90 177.20 L9.90 184.20 L3.40 180.70 Z" fill="#777"/><path d="M354.90 177.20 L354.90 184.20 L361.00 180.70 Z" fill="#777"/></svg>
<div class="r" style="left:15.10px;top:177.10px;width:215.90px;height:6.9px;background:#888;border-radius:3.5px;"></div>
</div>
<div class="r" style="left:599.80px;top:67.10px;width:406.20px;height:33.00px;background:#ebe9e7;"></div>
<svg style="left:0;top:0" width="1024" height="120"><path d="M607 79.4 H620 M607 84.2 H620 M607 88.9 H620" stroke="#666" stroke-width="0.9"/></svg>
<div class="t " style="top:78.13px;font-size:14px;line-height:1.1172em;font-family:'Liberation Sans', sans-serif;color:#242424;left:629.80px;-webkit-text-stroke:0.4px #242424;transform:scaleX(0.98);transform-origin:0 0;">Copilot</div>
<div class="r" style="left:688.00px;top:67.10px;width:299.00px;height:41.50px;background:#fff;border-radius:7px;box-shadow:0 1px 2px rgba(0,0,0,0.14);"></div>
<div class="r" style="left:866.20px;top:74.40px;width:1.00px;height:27.00px;background:#e0e0e0;"></div>
<svg style="left:0;top:0" width="1024" height="120">
<path d="M882 90.5 L887 85.5 L892 90.5" fill="none" stroke="#444" stroke-width="1.1"/>
<path d="M907.8 85.5 L912.8 90.5 L917.8 85.5" fill="none" stroke="#444" stroke-width="1.1"/>
<path d="M933.8 82.2 L946.9 82.2 L941.6 88.3 L941.6 93.5 L939.1 93.5 L939.1 88.3 Z" fill="none" stroke="#444" stroke-width="1.1" stroke-linejoin="round"/>
<path d="M962.4 82.7 L972.4 93 M972.4 82.7 L962.4 93" fill="none" stroke="#444" stroke-width="1.1"/>
<path d="M1000.7 76.7 L1010.1 85.8 M1010.1 76.7 L1000.7 85.8" fill="none" stroke="#444" stroke-width="1.1"/>
</svg>
<div class="r" style="left:621.50px;top:296.60px;width:142.20px;height:18.60px;border:1px solid #d3d1cf;border-radius:4px;background:#eeecea;"></div>
<svg style="left:0;top:0" width="1024" height="683"><path d="M636.7 301.5 V311 M632 306.2 H641.4" stroke="#444" stroke-width="1.1"/></svg>
<div class="t " style="top:300.92px;font-size:10.58px;line-height:1.1172em;font-family:'Liberation Sans', sans-serif;color:#333;left:649.80px;transform:scaleX(0.9259);transform-origin:0 0;">Add results to new sheet</div>
<svg style="left:0;top:0" width="1024" height="683"><path d="M 632.10 327.30 Q 633.40 327.60 633.10 330.40 L 634.80 331.10 Q 636.20 331.80 635.50 333.50 L 634.50 336.40 Q 633.80 338.30 631.50 337.70 L 627.60 336.50 Q 626.00 335.70 626.20 333.80 Q 626.60 332.00 628.60 331.20 Q 630.20 330.40 630.80 328.50 Q 631.20 327.10 632.10 327.30 Z" fill="none" stroke="#3c3c3c" stroke-width="1.05" stroke-linejoin="round"/><path d="M 646.50 329.80 Q 647.50 328.00 651.50 327.30 Q 654.30 326.80 654.90 329.60 Q 655.40 332.80 653.80 333.50 L 652.80 334.00 Q 652.50 335.60 652.20 337.00 Q 651.60 338.20 650.60 337.00 Q 649.80 335.30 648.90 333.90 Q 647.50 332.80 646.60 331.60 Q 646.20 330.60 646.50 329.80 Z" fill="none" stroke="#3c3c3c" stroke-width="1.05" stroke-linejoin="round"/></svg>
<svg style="left:0;top:0" width="1024" height="683">
<defs><clipPath id="cl"><path d="M623.2 353.2 Q623.8 351.5 625.6 351.5 L631.6 351.5 Q633.4 351.7 632.6 354 L632 355.6 L635 355.6 Q637.2 356 636.8 358.4 L636 362.4 Q635.4 365.3 632.6 365.3 L625.5 365.3 Q621.6 365.1 621.8 361.6 Z"/></clipPath></defs>
<g clip-path="url(#cl)">
<rect x="620" y="350" width="18" height="5.2" fill="#2f6fe0"/>
<rect x="620" y="355.2" width="10" height="3.2" fill="#2f9a7a"/>
<rect x="620" y="358.4" width="10" height="3.6" fill="#e9ad3a"/>
<rect x="620" y="362" width="18" height="4" fill="#e98a3a"/>
<path d="M630 355.6 L638 355.6 L638 363 L629 363 Z" fill="#d457c0"/>
<path d="M625 362.5 L630 362.5 L629.5 366 L625 366 Z" fill="#e0503a"/>
</g>
</svg>
<div class="t " style="top:352.19px;font-size:12.6px;line-height:1.1172em;font-family:'Liberation Sans', sans-serif;color:#242424;left:644.30px;-webkit-text-stroke:0.4px #242424;transform:scaleX(0.95);transform-origin:0 0;">Copilot</div>
<div class="t " style="top:355.13px;font-size:8.91px;line-height:1.1172em;font-family:'Liberation Sans', sans-serif;color:#6a6a6a;left:691.80px;transform:scaleX(0.9259);transform-origin:0 0;">AI-generated content may be incorrect</div>
<div class="t " style="top:379.96px;font-size:11.97px;line-height:1.1172em;font-family:'Liberation Sans', sans-serif;color:#3a3a3a;left:621.00px;transform:scaleX(0.9524);transform-origin:0 0;">The spelling errors in the customer feedback have been corrected</div>
<div class="t " style="top:396.56px;font-size:11.97px;line-height:1.1172em;font-family:'Liberation Sans', sans-serif;color:#3a3a3a;left:621.00px;transform:scaleX(0.9524);transform-origin:0 0;">using the provided list of correct words. You can now see both the</div>
<div class="t " style="top:412.56px;font-size:11.97px;line-height:1.1172em;font-family:'Liberation Sans', sans-serif;color:#3a3a3a;left:621.00px;transform:scaleX(0.9524);transform-origin:0 0;">original and corrected feedback side by side for easy comparison.</div>
<svg style="left:0;top:0" width="1024" height="683"><path d="M 631.60 442.30 Q 632.90 442.60 632.60 445.40 L 634.30 446.10 Q 635.70 446.80 635.00 448.50 L 634.00 451.40 Q 633.30 453.30 631.00 452.70 L 627.10 451.50 Q 625.50 450.70 625.70 448.80 Q 626.10 447.00 628.10 446.20 Q 629.70 445.40 630.30 443.50 Q 630.70 442.10 631.60 442.30 Z" fill="none" stroke="#3c3c3c" stroke-width="1.05" stroke-linejoin="round"/><path d="M 646.00 444.80 Q 647.00 443.00 651.00 442.30 Q 653.80 441.80 654.40 444.60 Q 654.90 447.80 653.30 448.50 L 652.30 449.00 Q 652.00 450.60 651.70 452.00 Q 651.10 453.20 650.10 452.00 Q 649.30 450.30 648.40 448.90 Q 647.00 447.80 646.10 446.60 Q 645.70 445.60 646.00 444.80 Z" fill="none" stroke="#3c3c3c" stroke-width="1.05" stroke-linejoin="round"/></svg>
<svg style="left:0;top:0" width="1024" height="683">
<path d="M755 486.5 L750.5 486.5 Q748.8 486.5 748.8 488.2 L748.8 495 Q748.8 496.8 750.5 496.8 L755 496.8" fill="none" stroke="#444" stroke-width="1"/>
<path d="M752.5 491.6 L761.2 491.6 M758.3 488.6 L761.3 491.6 L758.3 494.6" fill="none" stroke="#444" stroke-width="1"/>
</svg>
<div class="t " style="top:487.24px;font-size:10.34px;line-height:1.1172em;font-family:'Liberation Sans', sans-serif;color:#555;left:766.90px;transform:scaleX(0.9091);transform-origin:0 0;">Stop advanced analysis</div>
<div class="r" style="left:620.90px;top:539.60px;width:254.90px;height:20.50px;border:1px solid #7fcb9c;border-radius:7px;"></div>
<div class="t " style="top:544.92px;font-size:10.58px;line-height:1.1172em;font-family:'Liberation Sans', sans-serif;color:#444;left:628.60px;transform:scaleX(0.9259);transform-origin:0 0;">Highlight which words were corrected in each feedback</div>
<div class="r" style="left:620.90px;top:567.50px;width:250.20px;height:20.70px;border:1px solid #7fcb9c;border-radius:7px;"></div>
<div class="t " style="top:572.92px;font-size:10.58px;line-height:1.1172em;font-family:'Liberation Sans', sans-serif;color:#444;left:628.60px;transform:scaleX(0.9259);transform-origin:0 0;">Summarize the most common spelling mistakes found</div>
<div class="r" style="left:621.70px;top:606.70px;width:373.10px;height:44.20px;background:#fff;border-radius:12px;box-shadow:0 1px 2px rgba(0,0,0,0.2);"></div>
<div class="t " style="top:622.56px;font-size:12.2px;line-height:1.1172em;font-family:'Liberation Sans', sans-serif;color:#6e6e6e;left:635.40px;transform:scaleX(0.9259);transform-origin:0 0;">Message Copilot</div>
<svg style="left:0;top:0" width="1024" height="683">
<g transform="translate(942.7,629) scale(0.86,0.95) translate(-942.7,-629)"><path d="M942.7 623.1 A2.3 2.3 0 0 0 938.7 624.7 A2.3 2.3 0 0 0 936.5 628.9 A2.3 2.3 0 0 0 938.1 633.3 A2.4 2.4 0 0 0 942.7 634.9 A2.4 2.4 0 0 0 947.3 633.3 A2.3 2.3 0 0 0 948.9 628.9 A2.3 2.3 0 0 0 946.7 624.7 A2.3 2.3 0 0 0 942.7 623.1 Z M942.7 623.4 V634.8" fill="none" stroke="#505050" stroke-width="0.95"/>
<path d="M939.2 627.2 Q941 627.8 942.6 626.6 M946.4 630.3 Q944.5 630.6 942.8 629.4 M938.8 631.2 Q940.6 630.8 941.4 632.6 M945 625.6 L945.6 627.4" fill="none" stroke="#505050" stroke-width="0.85"/></g>
<rect x="967.2" y="622.4" width="4.6" height="8.8" rx="2.3" fill="none" stroke="#505050" stroke-width="1"/>
<path d="M964.6 628.3 Q964.6 633.4 969.5 633.4 Q974.4 633.4 974.4 628.3 M969.5 633.4 V635.8" fill="none" stroke="#505050" stroke-width="1"/>
</svg>
<div class="r" style="left:1008.00px;top:517.20px;width:6.00px;height:87.70px;background:#666;border-radius:3px;"></div>
<div class="r" style="left:0.00px;top:681.00px;width:1024.00px;height:2.00px;background:#f6f6f6;"></div>
</body></html>
